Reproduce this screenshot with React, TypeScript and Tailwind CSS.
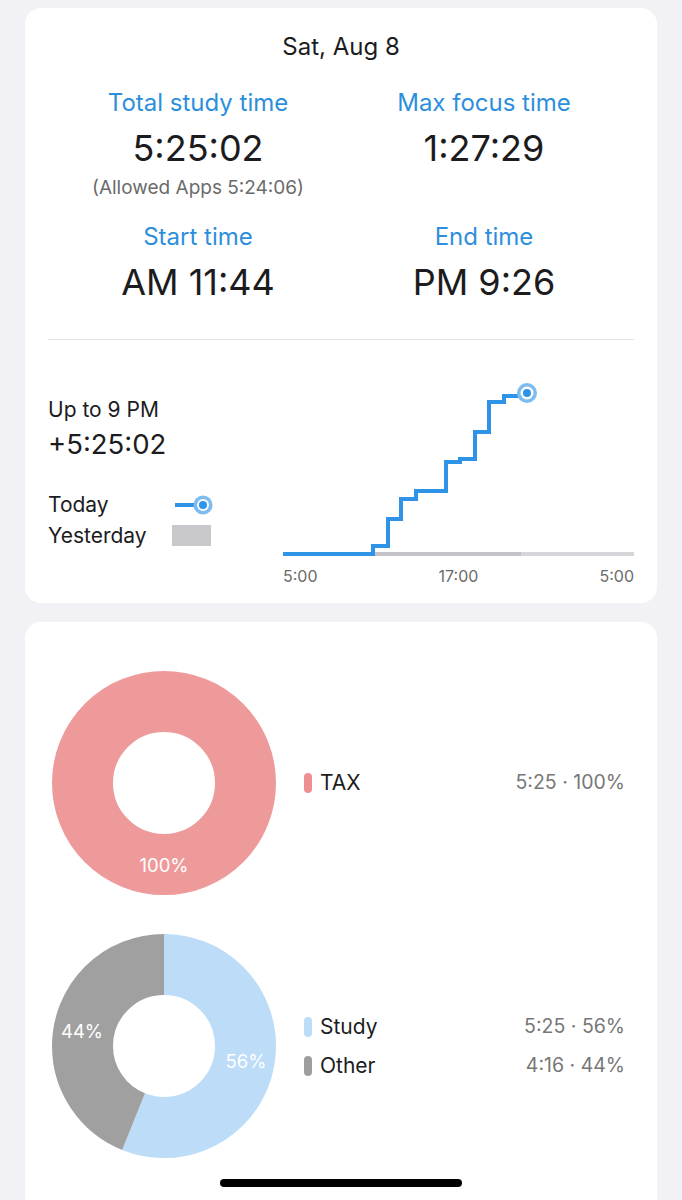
import React from 'react';

const font = { fontFamily: 'Inter, "Noto Sans", sans-serif' };

const Stat = ({ label, value, note }: { label: string; value: string; note?: string }) => (
  <div className="flex flex-col items-center">
    <div className="text-[24px] leading-[28px] text-[#2d8fdc]">{label}</div>
    <div className="mt-[9px] text-[36px] leading-[44px] text-[#1c1c1e]">{value}</div>
    {note && <div className="mt-[6px] text-[19px] leading-[24px] text-[#6b6b6b]">{note}</div>}
  </div>
);

const StepChart = () => (
  <div className="w-[351px] flex flex-col">
    <svg width="351" height="180" viewBox="0 0 351 180">
      <line x1="90" y1="174" x2="238" y2="174" stroke="#c4c3c9" strokeWidth="4" />
      <line x1="238" y1="174" x2="351" y2="174" stroke="#d6d6da" strokeWidth="4" />
      <path
        d="M0 174 H90 V166 H105 V139 H118 V119 H133 V111 H163 V82 H177 V79 H192 V52 H206 V22 H221 V16 H240"
        fill="none"
        stroke="#2f93e8"
        strokeWidth="4"
      />
      <circle cx="244" cy="13" r="10" fill="#7cbcf0" />
      <circle cx="244" cy="13" r="6.5" fill="#ffffff" />
      <circle cx="244" cy="13" r="4" fill="#2f93e8" />
    </svg>
    <div className="flex justify-between mt-[6px] text-[16px] leading-[20px] text-[#6b6b6b]">
      <span>5:00</span>
      <span>17:00</span>
      <span>5:00</span>
    </div>
  </div>
);

type Slice = { value: number; color: string };

const Donut = ({ slices, labels }: { slices: Slice[]; labels: { text: string; x: number; y: number }[] }) => {
  const r = 81.5;
  const c = 2 * Math.PI * r;
  let offset = 0;
  return (
    <svg width="224" height="224" viewBox="0 0 224 224" className="shrink-0">
      <g transform="rotate(-90 112 112)">
        {slices.map((s, i) => {
          const len = s.value * c;
          const el = (
            <circle
              key={i}
              cx="112"
              cy="112"
              r={r}
              fill="none"
              stroke={s.color}
              strokeWidth="61"
              strokeDasharray={`${len} ${c - len}`}
              strokeDashoffset={-offset}
            />
          );
          offset += len;
          return el;
        })}
      </g>
      {labels.map((l) => (
        <text
          key={l.text}
          x={112 + l.x}
          y={112 + l.y}
          textAnchor="middle"
          dominantBaseline="central"
          fill="#ffffff"
          fontSize="18.5"
          style={font}
        >
          {l.text}
        </text>
      ))}
    </svg>
  );
};

const LegendRow = ({ color, name, value }: { color: string; name: string; value: string }) => (
  <div className="flex items-center h-[39px]">
    <div className="w-[8px] h-[20px] rounded-full" style={{ backgroundColor: color }} />
    <div className="ml-[8px] text-[21px] text-[#1c1c1e]">{name}</div>
    <div className="ml-auto text-[19.5px] text-[#777777]">{value}</div>
  </div>
);

const App = () => {
  return (
    <div className="relative h-[1200px] overflow-hidden bg-[#f2f1f6] flex flex-col pt-[8px]" style={font}>
      {/* Summary card */}
      <div className="mx-[25px] bg-white rounded-[16px] px-[23px] pt-[25px] pb-[17px]">
        <div className="text-center text-[24px] leading-[28px] text-[#1c1c1e]">Sat, Aug 8</div>

        <div className="grid grid-cols-2 mt-[28px] mx-[7px]">
          <Stat label="Total study time" value="5:25:02" note="(Allowed Apps 5:24:06)" />
          <Stat label="Max focus time" value="1:27:29" />
        </div>
        <div className="grid grid-cols-2 mt-[23px] mx-[7px]">
          <Stat label="Start time" value="AM 11:44" />
          <Stat label="End time" value="PM 9:26" />
        </div>

        <div className="mt-[35px] h-px bg-[#e3e3e6]" />

        <div className="flex pt-[40px]">
          <div className="w-[235px] pt-[18px]">
            <div className="text-[21px] leading-[24px] text-[#1c1c1e]">Up to 9 PM</div>
            <div className="mt-[6px] text-[27.5px] leading-[32px] text-[#1c1c1e]">+5:25:02</div>
            <div className="mt-[29px] flex items-center h-[31px]">
              <span className="w-[127px] text-[21px] text-[#1c1c1e]">Today</span>
              <svg width="40" height="22" viewBox="0 0 40 22">
                <line x1="0" y1="11" x2="24" y2="11" stroke="#2f93e8" strokeWidth="4" />
                <circle cx="28" cy="11" r="9.5" fill="#7cbcf0" />
                <circle cx="28" cy="11" r="6" fill="#ffffff" />
                <circle cx="28" cy="11" r="4" fill="#2f93e8" />
              </svg>
            </div>
            <div className="flex items-center h-[31px]">
              <span className="w-[124px] text-[21px] text-[#1c1c1e]">Yesterday</span>
              <div className="w-[39px] h-[21px] bg-[#c7c7cc]" />
            </div>
          </div>
          <StepChart />
        </div>
      </div>

      {/* Breakdown card */}
      <div className="mx-[25px] mt-[19px] flex-1 bg-white rounded-t-[16px] pl-[27px] pr-[32px] pt-[49px]">
        <div className="flex items-center">
          <Donut
            slices={[{ value: 1, color: '#ee9a9b' }]}
            labels={[{ text: '100%', x: 0, y: 82 }]}
          />
          <div className="flex-1 ml-[28px]">
            <LegendRow color="#ee8f93" name="TAX" value="5:25 · 100%" />
          </div>
        </div>

        <div className="flex items-center mt-[39px]">
          <Donut
            slices={[
              { value: 0.56, color: '#bcdcf7' },
              { value: 0.44, color: '#a0a0a0' },
            ]}
            labels={[
              { text: '56%', x: 82, y: 15 },
              { text: '44%', x: -82, y: -15 },
            ]}
          />
          <div className="flex-1 ml-[28px]">
            <LegendRow color="#bcdcf7" name="Study" value="5:25 · 56%" />
            <LegendRow color="#9e9e9e" name="Other" value="4:16 · 44%" />
          </div>
        </div>
      </div>

      {/* Home indicator */}
      <div className="absolute left-[220px] top-[1179px] w-[242px] h-[8px] rounded-full bg-black" />
    </div>
  );
};

export default App;
